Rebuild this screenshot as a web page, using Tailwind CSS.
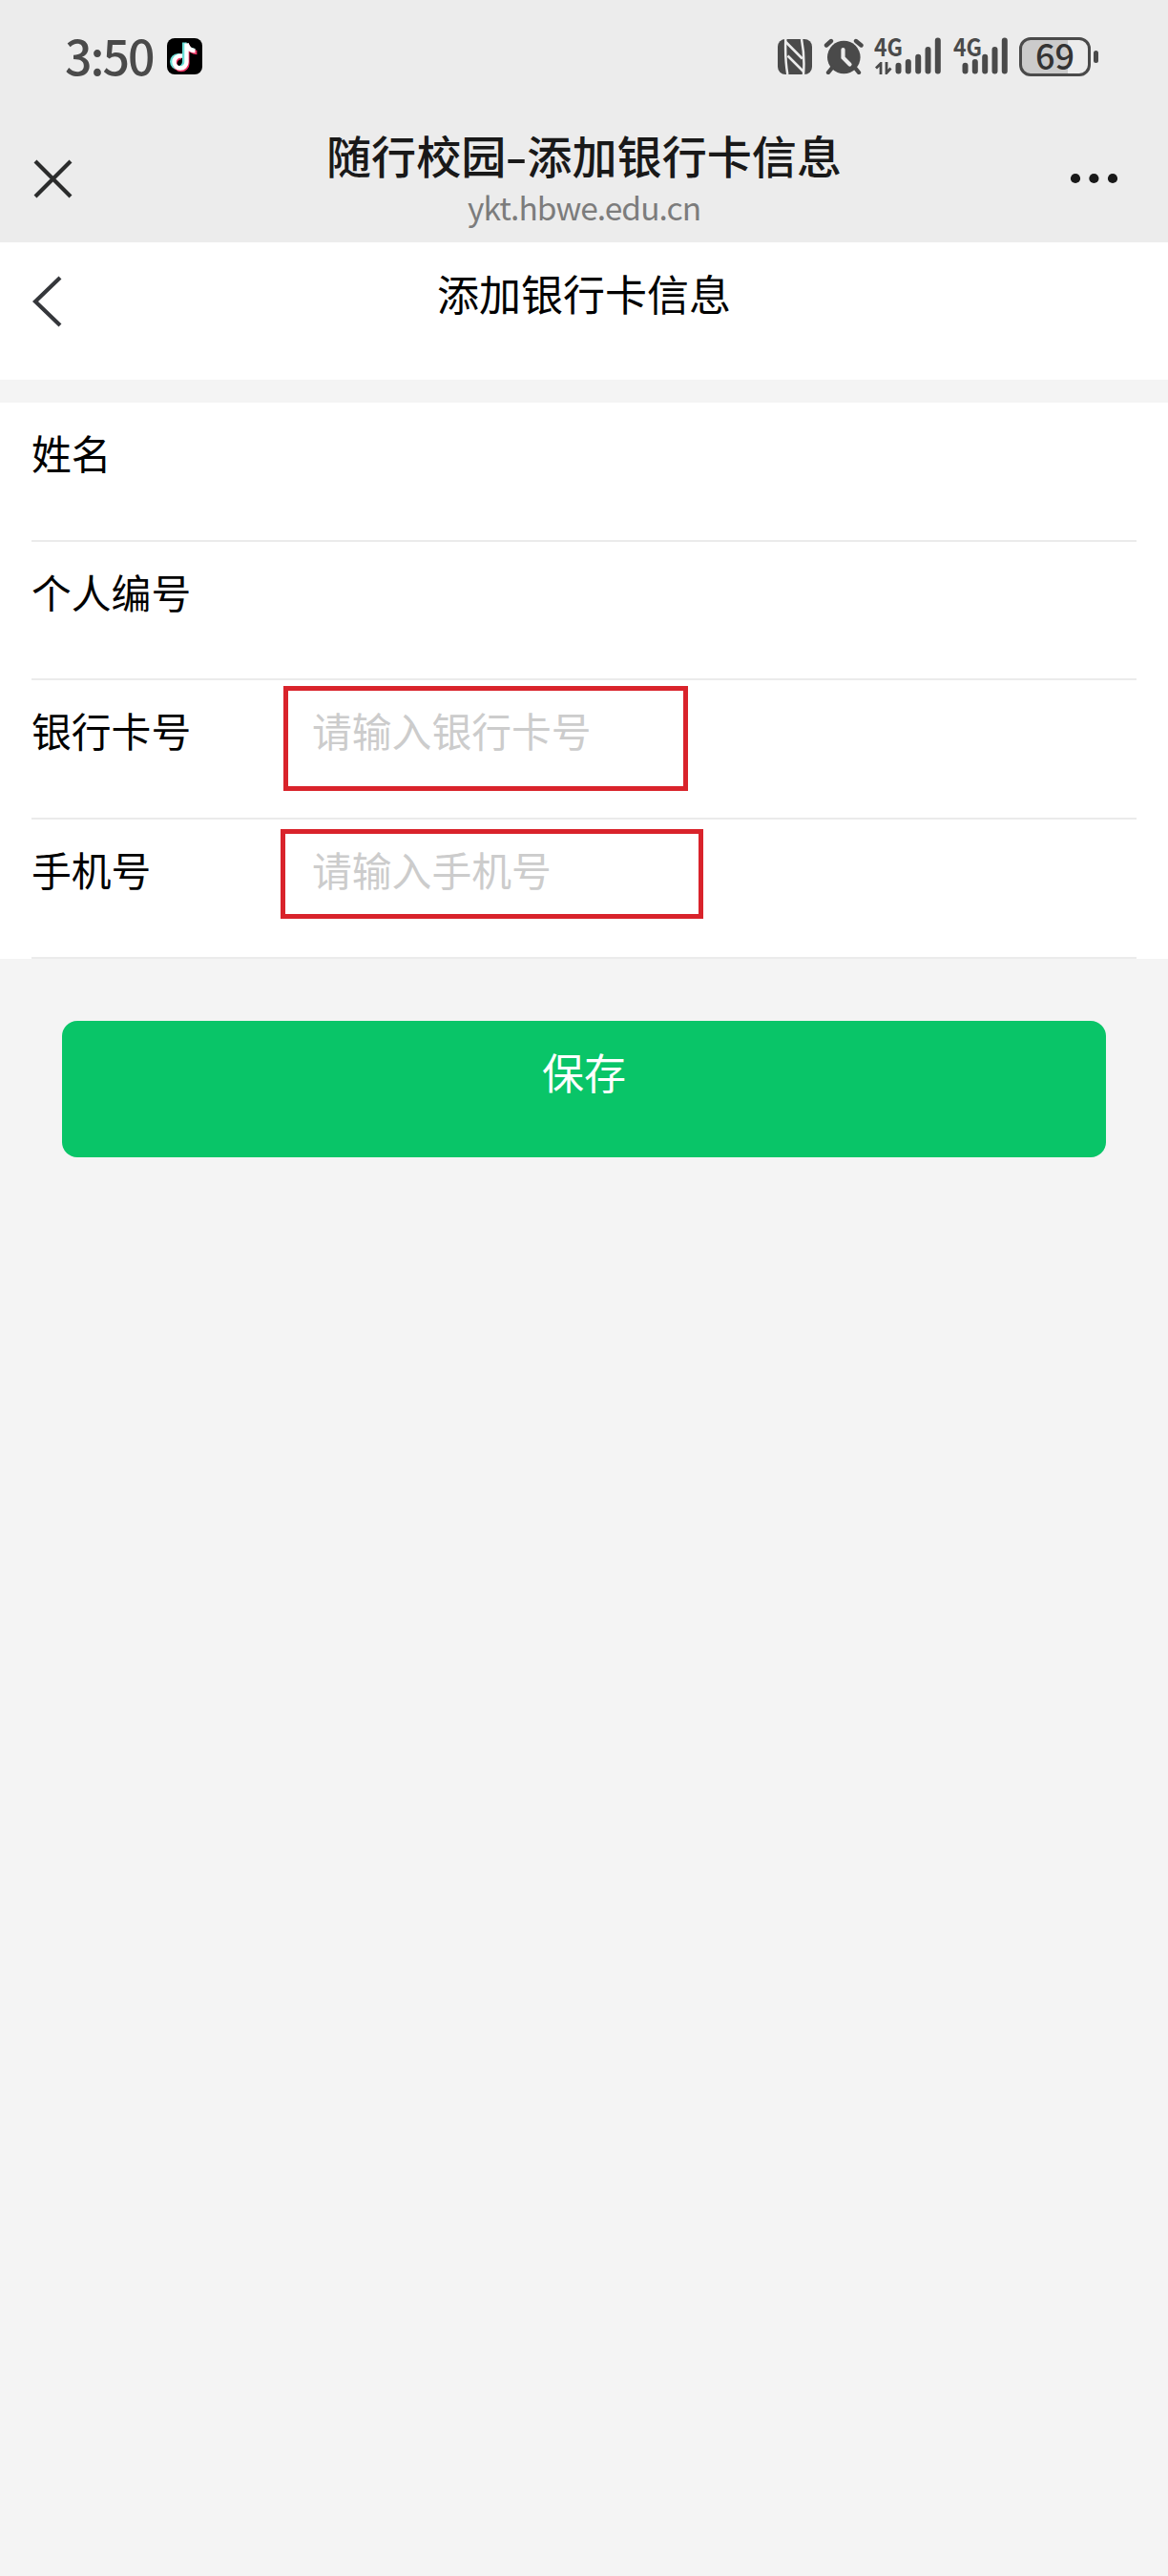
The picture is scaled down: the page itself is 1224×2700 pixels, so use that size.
<!DOCTYPE html>
<html lang="zh-CN">
<head>
<meta charset="utf-8">
<title>随行校园-添加银行卡信息</title>
<script src="https://cdn.jsdelivr.net/npm/@tailwindcss/browser@4"></script>
</head>
<body class="bg-[#f4f4f4] font-['Noto_Sans_CJK_SC',sans-serif] text-black">
<div class="flex h-[2700px] w-[1224px] flex-col overflow-hidden">

  <header class="h-[254px] shrink-0 bg-[#ececec]">
    <!-- status bar -->
    <div class="flex h-[120px] items-start pr-[73px] pl-[68px] text-[#4a4a4a]">
      <span class="mt-[32px] w-[107px] text-[50px] leading-[50px] font-medium tracking-[-2px]">3:50</span>
      <svg class="mt-[40px] h-[38px] w-[37px]" viewBox="0 0 37 38">
        <rect width="37" height="38" rx="8" fill="#000"/>
        <g fill="none" stroke-width="4.4">
          <path d="M19 5v20a6.5 6.5 0 1 1-6.500-6.500h2M19 5c1 5 5 8 10 8" stroke="#69ddd6" transform="translate(-.8 -.4)"/>
          <path d="M21 6v19.500a6.500 6.500 0 1 1-6.500-6.500M21 6c1 5 5 8 10 8" stroke="#ee3363" transform="translate(.4 1)"/>
          <path d="M20.500 5.500v19.500a6.500 6.500 0 1 1-6.500-6.500h2M20.500 5.500c1 5 4.500 7.500 9 7.800" stroke="#fff"/>
        </g>
      </svg>
      <div class="ml-auto flex pt-[38px]">
        <svg class="mt-[3px] h-[37px] w-[36px]" viewBox="0 0 36 37">
          <rect width="36" height="37" rx="8" fill="currentColor"/>
          <g fill="none" stroke="#ececec" stroke-width="2.500">
            <path d="M8.300 0Q7.500 21 10.300 37M25 0Q28.500 18 27 37"/>
            <path d="M8.500 3 25.800 20.500M10.500 17.500 27 34"/>
          </g>
        </svg>
        <svg class="mt-[2px] ml-[12px] h-[38px] w-[42px]" viewBox="0 0 42 38" fill="none" stroke="currentColor" stroke-linecap="round">
          <circle cx="21.300" cy="20" r="17.300" fill="currentColor" stroke="none"/>
          <path d="M3 7.500 8 3M34 3l5.500 4.500M9 31l-4 5M33 31l4 5" stroke-width="4.400"/>
          <path d="M20.500 12v8.500l7 7" stroke="#ececec" stroke-width="4.200"/>
        </svg>
        <div class="ml-[12px] flex w-[69px]">
          <div class="relative h-[42px] w-[21px]">
            <span class="absolute top-[-1px] left-[-1px] origin-left scale-x-[.92] text-[25px] leading-[22px] font-bold">4G</span>
            <svg class="absolute top-[27px] left-0 h-[13px] w-[18px]" viewBox="0 0 18 13" fill="none" stroke="currentColor" stroke-width="2.800"><path d="M6 13V1.500L1 6.500M12 0v11.500l4.500-5"/></svg>
          </div>
          <svg class="h-[42px] w-[48px]" viewBox="0 0 48 42" stroke="currentColor" stroke-width="6" stroke-linecap="round">
            <path d="M3.500 30.700v5.800M13.800 27v9.500M24.200 21.800v14.700M34.500 14v22.500M44.800 4.500v32"/>
          </svg>
        </div>
        <div class="ml-[13px] flex w-[57px]">
          <div class="relative h-[42px] w-[9px]">
            <span class="absolute top-[-1px] left-0 origin-left scale-x-[.92] text-[25px] leading-[22px] font-bold">4G</span>
          </div>
          <svg class="h-[42px] w-[48px]" viewBox="0 0 48 42" stroke="currentColor" stroke-width="6" stroke-linecap="round">
            <path d="M3.500 30.700v5.800M13.800 27v9.500M24.200 21.800v14.700M34.500 14v22.500M44.800 4.500v32"/>
          </svg>
        </div>
        <div class="ml-[12px] flex items-center">
          <div class="flex h-[41px] w-[75px] items-center justify-center rounded-[12px] border-[3px] border-[#4a4a4a] bg-linear-to-r from-[#cbcbcb] from-70% to-[#ececec] to-70%">
            <span class="-mt-[4px] text-[36px] leading-[36px] font-medium text-[#333]">69</span>
          </div>
          <i class="ml-[3px] h-[13px] w-[5px] rounded-full bg-[#4a4a4a]"></i>
        </div>
      </div>
    </div>
    <!-- browser title bar -->
    <div class="flex h-[134px] items-start justify-between pr-[51px] pl-[35px]">
      <svg class="mt-[47px] h-[41px] w-[70px]" viewBox="0 0 70 41" stroke="#2b2c2c" stroke-width="4.200"><path d="m2 2 37 37M39 2 2 39"/></svg>
      <div class="flex flex-col items-center">
        <h1 class="mt-[18px] flex text-[47.100px] leading-[48px] font-medium whitespace-nowrap text-[#191919]"><span>随行校园</span><span class="w-[22px] scale-x-[1.400] text-center">-</span><span>添加银行卡信息</span></h1>
        <p class="mt-[10px] text-[33.500px] leading-[42px] tracking-[-.95px] text-[#7c7c7c]">ykt.hbwe.edu.cn</p>
      </div>
      <svg class="mt-[60px] h-[14px] w-[54px]" viewBox="0 0 54 14" fill="#191919"><circle cx="8" cy="7" r="5.100"/><circle cx="27.400" cy="7" r="5.100"/><circle cx="47" cy="7" r="5.100"/></svg>
    </div>
  </header>

  <nav class="flex h-[144px] shrink-0 items-start justify-between bg-white px-[34px]">
    <svg class="mt-[34px] h-[56px] w-[34px]" viewBox="0 0 34 56" fill="none" stroke="#35373b" stroke-width="4.200"><path d="M29 3 3 28l26 25"/></svg>
    <h2 class="mt-[31px] text-[44px] leading-[44px]">添加银行卡信息</h2>
    <span class="w-[34px]"></span>
  </nav>

  <main class="mt-[24px] flex flex-col">
    <form class="flex flex-col bg-white px-[33px] text-[41.800px] leading-[42px]">
      <div class="flex h-[146px] border-b-2 border-[#ebebeb] pt-[31px]"><label>姓名</label></div>
      <div class="flex h-[145px] border-b-2 border-[#ebebeb] pt-[31px]"><label>个人编号</label></div>
      <div class="flex h-[146px] items-start border-b-2 border-[#ebebeb]">
        <label class="mt-[31px] w-[264px]">银行卡号</label>
        <div class="mt-[6px] h-[110px] w-[424px] border-[5px] border-[#d9232b] pt-[20px] pl-[25px] text-[#ccc]">请输入银行卡号</div>
      </div>
      <div class="flex h-[146px] items-start border-b-2 border-[#ebebeb]">
        <label class="mt-[31px] w-[261px]">手机号</label>
        <div class="mt-[10px] h-[94px] w-[443px] border-[5px] border-[#d9232b] pt-[16px] pl-[28px] text-[#ccc]">请输入手机号</div>
      </div>
    </form>
    <button class="mx-[65px] mt-[65px] flex h-[143px] justify-center rounded-[16px] bg-[#09c568] pt-[31px] text-[44px] leading-[44px] text-white">保存</button>
  </main>
</div>
</body>
</html>
